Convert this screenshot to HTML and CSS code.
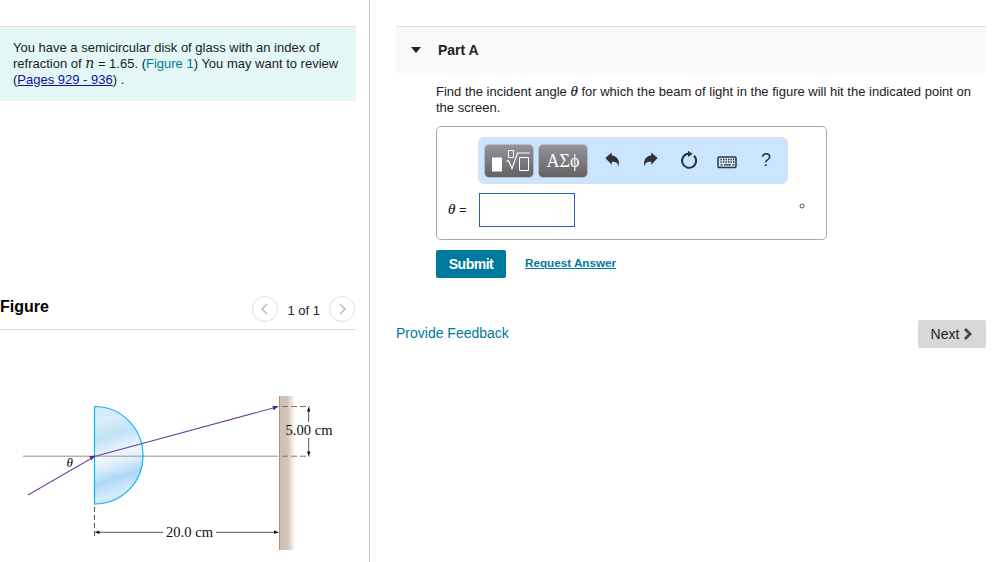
FILE: index.html
```html
<!DOCTYPE html>
<html lang="en">
<head>
<meta charset="utf-8">
<title>Part A</title>
<link rel="stylesheet" href="styles.css">
</head>
<body>
<div class="page">
  <aside class="left">
    <section class="problem">
      <div>You have a semicircular disk of glass with an index of</div>
      <div>refraction of <i class="math n">n</i> = 1.65. (<a class="fig-link">Figure 1</a>) You may want to review</div>
      <div>(<a class="pages">Pages 929 - 936</a>) .</div>
    </section>
    <header class="figure-head">
      <h2>Figure</h2>
      <div class="pager">
        <button class="circle"><svg width="24" height="24" viewBox="0 0 24 24"><path d="M14 7 9 12l5 5"/></svg></button>
        <span>1 of 1</span>
        <button class="circle"><svg width="24" height="24" viewBox="0 0 24 24"><path d="M10 7l5 5-5 5"/></svg></button>
      </div>
    </header>
    <svg class="diagram" width="356" height="232" viewBox="0 330 356 232">
      <defs>
        <linearGradient id="glass" gradientUnits="userSpaceOnUse" x1="94" y1="410" x2="124" y2="503">
          <stop offset="0" stop-color="#d5ebf9"/>
          <stop offset=".13" stop-color="#d9edfa"/>
          <stop offset=".3" stop-color="#c2e2f7"/>
          <stop offset=".5" stop-color="#eef6fd"/>
          <stop offset=".6" stop-color="#dceefb"/>
          <stop offset=".73" stop-color="#acd9f6"/>
          <stop offset=".88" stop-color="#d5eafa"/>
          <stop offset="1" stop-color="#c9e5f8"/>
        </linearGradient>
        <linearGradient id="wall">
          <stop offset="0" stop-color="#cdbfb3"/>
          <stop offset=".55" stop-color="#d2c5ba"/>
          <stop offset="1" stop-color="#fff"/>
        </linearGradient>
      </defs>
      <rect x="279" y="396" width="16" height="154" fill="url(#wall)"/>
      <path d="M279.500 396v154" stroke="#a39486"/>
      <path d="M94.500 406.500C122 406.500 143 429 143 455.500S122 504 94.500 504Z" fill="url(#glass)"/>
      <path d="M23 456.200H278" stroke="#b5b5b5" stroke-width="1.500"/>
      <path d="M94.500 406.500C122 406.500 143 429 143 455.500S122 504 94.500 504Z" fill="none" stroke="#0db9ec" stroke-width="1.200"/>
      <path d="M28 495 94.500 456.500 275 407.500" fill="none" stroke="#7140a0" stroke-width="1.100"/>
      <path d="M95.500 455.500 91.500 460.200 89 456.200ZM279 406.300 273.500 410.200 272.500 405.800Z" fill="#5d2590"/>
      <path d="M94.500 507v29" stroke="#555" stroke-dasharray="5 3"/>
      <path d="M282 406.500h28M282 456.200h28" stroke="#777" stroke-dasharray="6 3"/>
      <path d="M97 532.300h66M216 532.300h61M308.700 408v14M308.700 438v17" stroke="#444" stroke-width=".9"/>
      <path d="M94.500 532.300l5-1.800v3.600ZM279 532.300l-5-1.800v3.600ZM308.700 406.500l-1.700 5h3.400ZM308.700 456.500l-1.700-5h3.400Z" fill="#111"/>
      <text class="theta" x="66.500" y="467">θ</text>
      <text class="measure" x="285.500" y="435" textLength="47" lengthAdjust="spacingAndGlyphs">5.00 cm</text>
      <text class="measure" x="166" y="537" textLength="47" lengthAdjust="spacingAndGlyphs">20.0 cm</text>
    </svg>
  </aside>
  <main class="right">
    <header class="part"><i class="caret"></i><h1>Part A</h1></header>
    <section class="answer">
      <div class="question">
        <div>Find the incident angle <i class="math th">θ</i> for which the beam of light in the figure will hit the indicated point on</div>
        <div>the screen.</div>
      </div>
      <div class="entry">
        <div class="toolbar">
          <button class="tool"><svg width="48" height="32" viewBox="0 0 48 32"><path d="M7 12.500h10v14H7z" fill="#fff"/><path d="M23.500 5.500h5v7h-5zM34.500 12.500h9v13h-9z" fill="none" stroke="#fff"/><path d="M21.500 16.500l2-1 3.500 8 5.500-15.500H44.500" fill="none" stroke="#fff" stroke-width="1.200"/></svg></button>
          <button class="tool greek">ΑΣϕ</button>
          <svg class="icons" width="194" height="45" viewBox="593 138 194 45">
            <g fill="#333"><path d="M605.300 158l6.500-5.500v3c5 .5 8.500 4 6.500 11.500-.2-4-2-5.200-6.500-5.200v3Z"/><path d="M657.700 158l-6.500-5.500v3c-5 .5-8.500 4-6.500 11.500.2-4 2-5.200 6.500-5.200v3Z"/></g>
            <path d="M688.500 153.800a7 7 0 1 0 5.500 2" fill="none" stroke="#333" stroke-width="2"/>
            <path d="M688 150.800l4.700 3.100-4.700 3.200Z" fill="#333"/>
            <rect x="718" y="157" width="18" height="10.500" rx="1" fill="none" stroke="#333" stroke-width="1.500"/>
            <path d="M720.500 159.500h14M720.500 162h14" stroke="#333" stroke-width="1.300" stroke-dasharray="1.400 1.100"/>
            <path d="M720.500 164.800h2M724 164.800h7M732.500 164.800h2" stroke="#333" stroke-width="1.300"/>
            <text class="help" x="761" y="166">?</text>
          </svg>
        </div>
        <div class="input-row">
          <label><i class="math th">θ</i> =</label>
          <input class="field" aria-label="theta">
          <svg class="degree" width="8" height="8" viewBox="0 0 8 8"><circle cx="4" cy="4" r="2" fill="none" stroke="#555"/></svg>
        </div>
      </div>
      <div class="actions"><button class="submit">Submit</button><a>Request Answer</a></div>
    </section>
    <footer class="footer">
      <a>Provide Feedback</a>
      <button class="next">Next <svg width="10" height="14" viewBox="0 0 10 14"><path d="M2 2l5 5-5 5" fill="none" stroke="#444" stroke-width="2.800"/></svg></button>
    </footer>
  </main>
</div>
</body>
</html>
```
FILE: styles.css
```css
* { box-sizing: border-box; }
body { margin: 0; background: #fff; color: #222; font: 13px/16px "Liberation Sans", Arial, sans-serif; }
button { padding: 0; border: 0; font-family: inherit; }
.page { display: flex; width: 1002px; height: 562px; overflow: hidden; }
.left { width: 370px; padding-top: 26px; border-right: 1px solid #bbc4cf; }
.problem { width: 356px; height: 75px; padding: 13px 0 0 13px; border-top: 1px solid #d9dfdf; background: #e3f7f7; white-space: nowrap; }
.math { font-family: "Liberation Serif", serif; line-height: 10px; }
.n { font-family: "DejaVu Serif", serif; font-size: 14px; }
.th { font-size: 15px; -webkit-text-stroke: .2px #222; }
.fig-link { color: #007a9c; }
.pages { color: #11119b; text-decoration: underline; }
.figure-head { display: flex; justify-content: space-between; width: 356px; height: 34px; margin-top: 195px; border-bottom: 1px solid #d9d9d9; }
h1, h2 { margin: 0; font-weight: bold; }
h2 { padding-top: 2px; color: #000; font-size: 16px; line-height: 18px; }
.pager { display: flex; gap: 9px; height: 26px; padding-right: 1px; font-size: 13px; }
.pager span { padding-top: 7px; white-space: nowrap; }
.circle { display: grid; place-items: center; width: 26px; height: 26px; border: 1px solid #e0e0e0; border-radius: 50%; background: #fff; }
.circle path { fill: none; stroke: #bbb; stroke-width: 1.5; }
.diagram { display: block; }
.theta { font: italic 13px "Liberation Serif", serif; }
.measure { font: 14px "Liberation Serif", serif; fill: #111; }
.right { width: 632px; padding: 26px 16px 0 26px; }
.part { display: flex; align-items: center; height: 47px; padding-left: 15px; border-top: 1px solid #ddd; background: #f9f9f9; }
.caret { width: 0; height: 0; border: 5px solid transparent; border-top: 6px solid #222; border-bottom: 0; }
h1 { margin-left: 17px; font-size: 14px; }
.answer { padding: 11px 0 0 40px; }
.question { height: 42px; white-space: nowrap; }
.entry { width: 391px; height: 114px; padding: 10px 0 0 11px; border: 1px solid #aaa; border-radius: 5px; }
.toolbar { display: flex; align-items: center; width: 310px; height: 47px; margin-left: 30px; padding-left: 5px; border: 1px solid #d9e0e6; border-radius: 6px; background: #cae5ff; }
.tool { width: 50px; height: 34px; margin-right: 4px; border: 1px solid #bbb; border-radius: 5px; background: linear-gradient(#95939b, #626264); color: #fff; }
.tool svg { display: block; }
.greek { font: 18px/28px "Liberation Serif", serif; }
.icons { margin-left: 1px; }
.help { font: 18px "Liberation Sans", sans-serif; fill: #333; }
.input-row { display: flex; align-items: center; height: 34px; margin-top: 9px; }
.input-row label { width: 31px; white-space: nowrap; }
.field { width: 96px; height: 34px; padding: 0; border: 1px solid #3459c6; background: #fff; }
.degree { margin: -8px 0 0 223px; }
.actions { display: flex; margin-top: 10px; gap: 19px; }
.submit { width: 70px; height: 28px; border-radius: 2px; background: #007a9c; color: #fff; font-size: 14px; font-weight: bold; letter-spacing: -.5px; }
.actions a { padding-top: 5px; color: #007a9c; font-size: 11.7px; font-weight: bold; text-decoration: underline; }
.footer { display: flex; justify-content: space-between; margin-top: 42px; }
.footer a { padding-top: 5px; color: #007a9c; font-size: 14px; }
.next { display: flex; align-items: center; justify-content: center; gap: 4px; width: 68px; height: 28px; border-radius: 2px; background: #d8d8d8; color: #222; font-size: 14px; }
```
